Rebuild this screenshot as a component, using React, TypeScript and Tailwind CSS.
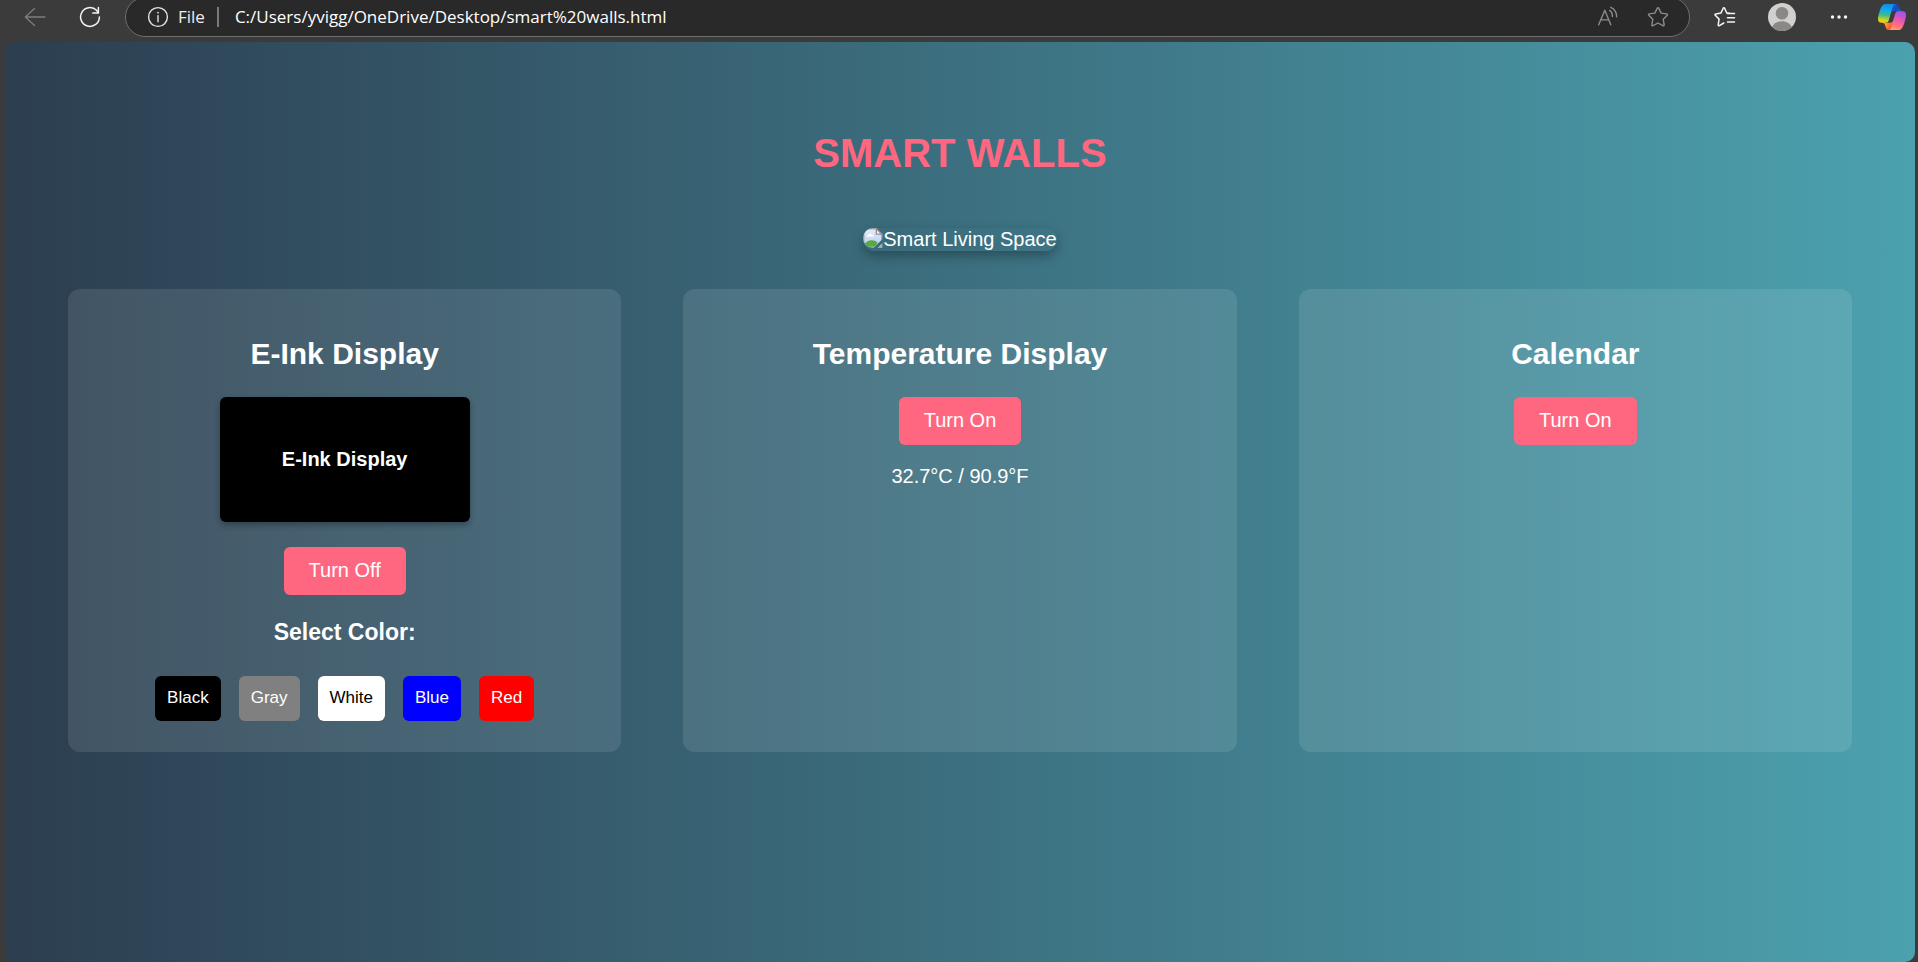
import { useState } from "react";
import type { ReactNode } from "react";

function BackIcon() {
  return (
    <svg width="22" height="22" viewBox="0 0 22 22" fill="none" stroke="#7d7d7d" strokeWidth="1.3" strokeLinecap="round" strokeLinejoin="round">
      <path d="M21 11H1.3M10.5 2.5 1.3 11l9.2 8.5" />
    </svg>
  );
}

function RefreshIcon() {
  return (
    <svg width="22" height="22" viewBox="0 0 22 22" fill="none" stroke="#f2f2f2" strokeWidth="1.5" strokeLinecap="round" strokeLinejoin="round">
      <path d="M20.4 11A9.4 9.4 0 1 1 17.6 4.3L19.3 6.8" />
      <path d="M19.4 1.5v5.4h-5.6" />
    </svg>
  );
}

function InfoIcon() {
  return (
    <svg width="22" height="22" viewBox="0 0 22 22" fill="none" stroke="#e4e4e4" strokeWidth="1.4">
      <circle cx="11" cy="11" r="9.4" />
      <path d="M11 9.6v6.2" strokeLinecap="round" />
      <circle cx="11" cy="6.7" r="0.5" fill="#e4e4e4" strokeWidth="1" />
    </svg>
  );
}

function ReadAloudIcon() {
  return (
    <svg width="22" height="22" viewBox="0 0 22 22" fill="none" stroke="#8c8c8c" strokeWidth="1.4" strokeLinecap="round" strokeLinejoin="round">
      <path d="M1.7 18.8 7.8 4.2l6 14.6M3.8 13.900h8" />
      <path d="M12.600 4.400c2 1.200 2.900 3.300 2.800 6.100" />
      <path d="M13.800 1.300c3.800 1.900 5.900 5.200 5.800 9.400" />
    </svg>
  );
}

function StarIcon() {
  return (
    <svg width="22" height="22" viewBox="0 0 22 22" fill="none" stroke="#8c8c8c" strokeWidth="1.4" strokeLinejoin="round">
      <path d="M10.3 2.1a.8.8 0 0 1 1.4 0l2.5 5 5.6.8a.8.8 0 0 1 .45 1.4l-4.05 3.95.95 5.55a.8.8 0 0 1-1.15.85L11 17l-5 2.65a.8.8 0 0 1-1.15-.85l.95-5.55L1.75 9.3a.8.8 0 0 1 .45-1.4l5.6-.8z" />
    </svg>
  );
}

function FavoritesIcon() {
  return (
    <svg width="22" height="22" viewBox="0 0 22 22" fill="none" stroke="#f5f5f5" strokeWidth="1.5" strokeLinecap="round" strokeLinejoin="round">
      <path d="M15.4 7.3 12.8 7 10.6 2.2a.8.8 0 0 0-1.4 0L6.9 7.1l-5.2.8a.8.8 0 0 0-.45 1.4l3.85 3.85-.9 5.6a.8.8 0 0 0 1.15.85L9.8 17" />
      <path d="M13.5 7.4H20.5M13.5 11.7H20.5M13.5 16H20.5" />
    </svg>
  );
}

function AvatarIcon() {
  return (
    <svg width="28" height="28" viewBox="0 0 28 28">
      <defs>
        <clipPath id="avatarClip">
          <circle cx="14" cy="14" r="14" />
        </clipPath>
      </defs>
      <circle cx="14" cy="14" r="14" fill="#d2d0ce" />
      <g clipPath="url(#avatarClip)" fill="#8a8886">
        <circle cx="14" cy="10.3" r="6.3" />
        <path d="M4 24.5c1.5-4 5.5-6.3 10-6.3s8.5 2.3 10 6.3L22 30H6z" />
      </g>
    </svg>
  );
}

function MoreIcon() {
  return (
    <svg width="18" height="6" viewBox="0 0 18 6" fill="#f5f5f5">
      <circle cx="2.5" cy="3" r="1.7" />
      <circle cx="9" cy="3" r="1.7" />
      <circle cx="15.5" cy="3" r="1.7" />
    </svg>
  );
}

function CopilotIcon() {
  return (
    <svg width="28" height="26" viewBox="2 4 44 40" preserveAspectRatio="none">
      <defs>
        <linearGradient id="foldTop" x1="38" y1="16" x2="24" y2="6" gradientUnits="userSpaceOnUse">
          <stop offset="0" stopColor="#1a6ddc" />
          <stop offset="0.5" stopColor="#1448c0" />
          <stop offset="1" stopColor="#1a5fd8" />
        </linearGradient>
        <linearGradient id="foldBottom" x1="10" y1="33" x2="24" y2="42" gradientUnits="userSpaceOnUse">
          <stop offset="0" stopColor="#ffb657" />
          <stop offset="0.5" stopColor="#ff7a3d" />
          <stop offset="1" stopColor="#f0413c" />
        </linearGradient>
        <linearGradient id="leafLeft" x1="14" y1="4" x2="11" y2="33" gradientUnits="userSpaceOnUse">
          <stop offset="0" stopColor="#0a8fe6" />
          <stop offset="0.35" stopColor="#1ba8e8" />
          <stop offset="0.6" stopColor="#3fbf7f" />
          <stop offset="0.85" stopColor="#d4d321" />
          <stop offset="1" stopColor="#ffc800" />
        </linearGradient>
        <linearGradient id="leafRight" x1="38" y1="15" x2="28" y2="44" gradientUnits="userSpaceOnUse">
          <stop offset="0" stopColor="#9a55f0" />
          <stop offset="0.35" stopColor="#d454c0" />
          <stop offset="0.7" stopColor="#ff6a8a" />
          <stop offset="1" stopColor="#ffa05c" />
        </linearGradient>
      </defs>
      <path fill="url(#foldTop)" d="M34.142 7.325A4.63 4.63 0 0 0 29.7 4h-1.35a4.63 4.63 0 0 0-4.554 3.794L21.48 20.407l.575-1.965a4.63 4.63 0 0 1 4.444-3.33h7.853l3.294 1.282 3.175-1.283h-.926a4.63 4.63 0 0 1-4.443-3.325z" />
      <path fill="url(#foldBottom)" d="M14.33 40.656A4.63 4.63 0 0 0 18.779 44h2.87a4.63 4.63 0 0 0 4.629-4.51l.312-12.163-.654 2.233a4.63 4.63 0 0 1-4.443 3.329h-7.919l-2.823-1.532-3.057 1.532h.912a4.63 4.63 0 0 1 4.447 3.344z" />
      <path fill="url(#leafLeft)" d="M29.5 4H13.46c-4.583 0-7.332 6.057-9.165 12.113C2.123 23.29-.72 32.885 7.503 32.885h6.925a4.63 4.63 0 0 0 4.456-3.358c1.6-5.7 3.3-11.5 4.971-17.156.843-2.843 1.544-5.284 2.621-6.805C27.08 4.714 28.086 4 29.5 4z" />
      <path fill="url(#leafRight)" d="M18.498 44h16.04c4.582 0 7.332-6.058 9.165-12.115 2.171-7.177 5.013-16.775-3.208-16.775h-6.926a4.63 4.63 0 0 0-4.456 3.358c-1.6 5.7-3.3 11.5-4.972 17.16-.842 2.844-1.543 5.285-2.62 6.806-.604.852-1.61 1.566-3.023 1.566z" />
    </svg>
  );
}

function BrokenImageIcon() {
  return (
    <svg className="shrink-0" width="20" height="20" viewBox="0 0 20 20">
      <defs>
        <linearGradient id="photoSky" x1="0" y1="0" x2="0" y2="1">
          <stop offset="0" stopColor="#e6edfb" />
          <stop offset="1" stopColor="#b4c8f0" />
        </linearGradient>
        <clipPath id="photoTear">
          <path d="M0 0h20v10.5L10.5 20H0zM20 14.500V20h-5.500z" />
        </clipPath>
      </defs>
      <g clipPath="url(#photoTear)">
        <path d="M.7.7h12.6l5.5 5.5v13.1H.7z" fill="url(#photoSky)" stroke="#a3a3a3" strokeWidth="1.4" />
        <path d="M3.500 8.500c0-1.300 1-2 2-2 .6-1.200 2.800-1.200 3.400.1 1.200 0 1.900.8 1.900 1.900z" fill="#fff" />
        <path d="M1.400 18.600v-2.600c3-4.400 9.600-5 13.100-1.500l-2 4.100z" fill="#57ab3c" />
        <path d="M13.300.7v5.500h5.500z" fill="#fff" stroke="#909090" strokeWidth="1.3" strokeLinejoin="round" />
      </g>
    </svg>
  );
}

function ToolbarButton({ label, className, children }: { label: string; className: string; children: ReactNode }) {
  return (
    <button type="button" aria-label={label} className={`flex shrink-0 items-center justify-center ${className}`}>
      {children}
    </button>
  );
}

function BrowserBar() {
  return (
    <header className="flex h-[42px] shrink-0 items-end overflow-hidden pb-[5px] font-['Open_Sans','Noto_Sans',sans-serif]">
      <div className="flex h-10 w-full items-center pr-3 pl-6">
        <ToolbarButton label="Back" className="size-[22px]"><BackIcon /></ToolbarButton>
        <ToolbarButton label="Refresh" className="ml-[33px] size-[22px]"><RefreshIcon /></ToolbarButton>
        <div className="ml-6 flex h-10 min-w-0 flex-1 items-center rounded-full border border-[#6e6e6e] bg-[#292929] pr-5 pl-[21px] text-[17px] text-white">
          <InfoIcon />
          <span className="ml-[9px] text-[#ececec]">File</span>
          <span className="ml-3 h-5 w-[2px] shrink-0 bg-[#7a7a7a]" />
          <input
            type="text"
            aria-label="Address"
            defaultValue="C:/Users/yvigg/OneDrive/Desktop/smart%20walls.html"
            className="ml-4 min-w-0 flex-1 bg-transparent outline-none"
          />
          <ToolbarButton label="Read aloud" className="size-[22px]"><ReadAloudIcon /></ToolbarButton>
          <ToolbarButton label="Add to favorites" className="ml-7 size-[22px]"><StarIcon /></ToolbarButton>
        </div>
        <ToolbarButton label="Favorites" className="ml-6 size-[22px]"><FavoritesIcon /></ToolbarButton>
        <ToolbarButton label="Profile" className="ml-8 size-7"><AvatarIcon /></ToolbarButton>
        <ToolbarButton label="More" className="ml-[34px] h-[22px] w-[18px]"><MoreIcon /></ToolbarButton>
        <ToolbarButton label="Copilot" className="ml-[30px] h-7 w-7"><CopilotIcon /></ToolbarButton>
      </div>
    </header>
  );
}

function Card({ title, children }: { title: string; children: ReactNode }) {
  return (
    <section className="flex flex-col items-center rounded-xl bg-white/10 px-6 pt-12 pb-[31px]">
      <h2 className="mb-[26px] text-[30px] leading-[34px] font-bold">{title}</h2>
      {children}
    </section>
  );
}

function ToggleButton({ on, onClick }: { on: boolean; onClick: () => void }) {
  return (
    <button type="button" onClick={onClick} className="h-12 rounded-md bg-[#ff6780] px-[25px] pb-[2px] text-xl leading-6">
      {on ? "Turn Off" : "Turn On"}
    </button>
  );
}

const colors = [
  { name: "Black", style: "bg-black text-white" },
  { name: "Gray", style: "bg-[#808080] text-white" },
  { name: "White", style: "bg-white text-black" },
  { name: "Blue", style: "bg-[#0000ff] text-white" },
  { name: "Red", style: "bg-[#ff0000] text-white" },
];

export default function App() {
  const [inkOn, setInkOn] = useState(true);
  const [color, setColor] = useState(colors[0]);
  const [temperatureOn, setTemperatureOn] = useState(false);
  const [calendarOn, setCalendarOn] = useState(false);

  return (
    <div className="flex min-h-screen flex-col bg-[#3b3b3b]">
      <BrowserBar />
      <main className="mr-[3px] ml-[5px] flex flex-1 flex-col items-center rounded-[10px] bg-linear-to-r/srgb from-[#2c3e50] to-[#4ca1af] px-[63px] pt-[88px] pb-12 font-['Liberation_Sans',Arial,sans-serif] text-xl text-white">
        <h1 className="text-[40px] leading-[46px] font-bold text-[#ff6780]">SMART WALLS</h1>
        <div className="mt-[52px] flex h-[23px] items-start rounded-xl shadow-[0_5px_12px_rgba(0,0,0,0.3)]">
          <span className="overflow-hidden rounded-l-xl"><BrokenImageIcon /></span>
          <span className="leading-[23px]">Smart Living Space</span>
        </div>
        <div className="mt-[38px] grid w-full grid-cols-3 gap-[62px]">
          <Card title="E-Ink Display">
            <div className={`mb-[25px] flex h-[125px] w-[250px] items-center justify-center rounded-md pb-[2px] font-bold shadow-[0_3px_6px_rgba(0,0,0,0.3)] ${inkOn ? color.style : "bg-[#333333] text-[#333333]"}`}>
              E-Ink Display
            </div>
            <ToggleButton on={inkOn} onClick={() => setInkOn(!inkOn)} />
            <h3 className="mt-6 mb-[30px] text-[23px] leading-[27px] font-bold">Select Color:</h3>
            <div className="flex gap-[18px]">
              {colors.map((c) => (
                <button
                  key={c.name}
                  type="button"
                  onClick={() => setColor(c)}
                  className={`h-[45px] rounded-md px-3 pb-[2px] text-[17px] leading-5 ${c.style}`}
                >
                  {c.name}
                </button>
              ))}
            </div>
          </Card>
          <Card title="Temperature Display">
            <ToggleButton on={temperatureOn} onClick={() => setTemperatureOn(!temperatureOn)} />
            <p className="mt-5 leading-[23px]">32.7°C / 90.9°F</p>
          </Card>
          <Card title="Calendar">
            <ToggleButton on={calendarOn} onClick={() => setCalendarOn(!calendarOn)} />
          </Card>
        </div>
      </main>
    </div>
  );
}
